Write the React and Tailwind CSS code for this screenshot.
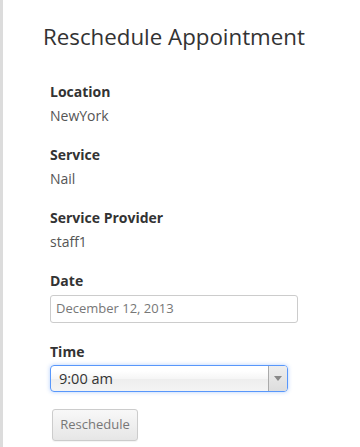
import React from "react";

const FIELDS = [
  { label: "Location", value: "NewYork" },
  { label: "Service", value: "Nail" },
  { label: "Service Provider", value: "staff1" },
];

function Field({ label, value }) {
  return (
    <div className="mb-[19px]">
      <div className="text-[14px] leading-[20px] font-bold text-[#333]">{label}</div>
      <div className="mt-[4px] text-[14px] leading-[20px] text-[#555]">{value}</div>
    </div>
  );
}

export default function App() {
  return (
    <div className="flex min-h-screen bg-white font-['Open_Sans',sans-serif]">
      <div className="w-[3px] shrink-0 bg-[#dcdcdc]" />
      <div className="pl-[47px] pt-[24px] pb-4">
        <h1 className="-ml-[7px] text-[22.3px] leading-[26px] font-normal text-[#333]">
          Reschedule Appointment
        </h1>

        {/* appointment info */}
        <div className="mt-[32px]">
          {FIELDS.map((f) => (
            <Field key={f.label} label={f.label} value={f.value} />
          ))}
        </div>

        <div className="text-[14px] leading-[20px] font-bold text-[#333]">Date</div>
        <div className="mt-[4px] w-[248px] h-[28px] flex items-center px-[5px] border border-[#ccc] rounded-[3px] text-[13px] text-[#777] bg-white">
          December 12, 2013
        </div>

        <div className="mt-[19px] text-[14px] leading-[20px] font-bold text-[#333]">Time</div>
        <div className="mt-[3px] w-[238px] h-[27px] flex border border-[#5897fb] rounded-[4px] shadow-[0_0_4px_rgba(88,151,251,0.45)] bg-[linear-gradient(#fff_20%,#f6f6f6_50%,#eee_52%,#f4f4f4_100%)] overflow-hidden">
          <div className="flex-1 flex items-center pl-[8px] text-[14.5px] text-[#333]">9:00 am</div>
          <div className="w-[19px] flex items-center justify-center border-l border-[#aaa] bg-[linear-gradient(#eee,#ddd)]">
            <span className="block w-0 h-0 border-l-[4px] border-r-[4px] border-t-[5px] border-l-transparent border-r-transparent border-t-[#888]" />
          </div>
        </div>

        <button className="mt-[17px] ml-[2px] w-[86px] h-[32px] border border-[#ccc] rounded-[3px] bg-[linear-gradient(#f8f8f8,#e6e6e6)] text-[13px] text-[#777] shadow-[0_1px_1px_rgba(0,0,0,0.05)]">
          Reschedule
        </button>
      </div>
    </div>
  );
}
